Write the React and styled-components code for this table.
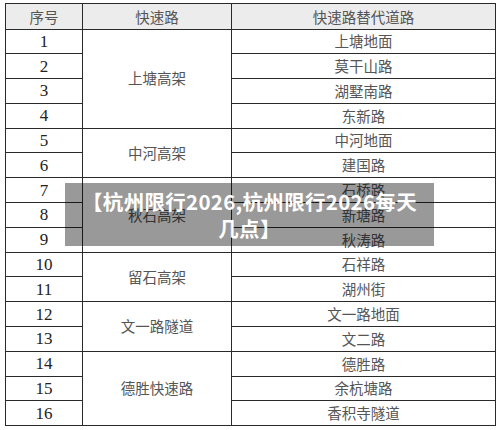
import React from 'react'
import styled, { createGlobalStyle } from 'styled-components'

const GlobalStyle = createGlobalStyle`
  html, body {
    margin: 0;
    padding: 0;
    background: #fff;
  }
`

const Page = styled.div`
  position: relative;
  width: 500px;
  height: 430px;
  padding: 3px 5px 0 5px;
  box-sizing: border-box;
  background: #fff;
`

const Table = styled.table`
  width: 490px;
  border-collapse: collapse;
  table-layout: fixed;
  font-family: "Liberation Serif", "Noto Sans CJK SC", serif;
  font-size: 15px;
  color: #333;
`

const HeadCell = styled.th`
  height: 24.5px;
  padding: 0;
  background: #ececec;
  border: 1.5px solid #2a2a2a;
  font-weight: 400;
  color: #555;
  text-align: center;
  font-family: "Noto Sans CJK SC", sans-serif;
  font-size: 14.5px;
`

const Cell = styled.td`
  height: 23.3px;
  padding: 0;
  border: 1.5px solid #2a2a2a;
  text-align: center;
  line-height: 1;
  color: ${props => (props.$num ? '#222' : '#555')};
  font-family: ${props =>
    props.$num ? '"Liberation Serif", serif' : '"Noto Sans CJK SC", sans-serif'};
  font-size: ${props => (props.$num ? '17px' : '14.5px')};
`

const Row = styled.tr`
  height: 24.8px;
`

const Banner = styled.div`
  position: absolute;
  left: 65px;
  top: 183px;
  width: 369px;
  height: 63px;
  background: rgba(0, 0, 0, 0.4);
  display: flex;
  align-items: center;
  justify-content: center;
  padding: 0 6px;
  box-sizing: border-box;
  color: #fff;
  font-family: "Noto Sans CJK SC", sans-serif;
  font-weight: 700;
  font-size: 20.5px;
  letter-spacing: 0.3px;
  line-height: 27px;
  text-align: center;
  white-space: nowrap;
`

const groups = [
  { road: '上塘高架', alts: ['上塘地面', '莫干山路', '湖墅南路', '东新路'] },
  { road: '中河高架', alts: ['中河地面', '建国路'] },
  { road: '秋石高架', alts: ['石桥路', '新塘路', '秋涛路'] },
  { road: '留石高架', alts: ['石祥路', '湖州街'] },
  { road: '文一路隧道', alts: ['文一路地面', '文二路'] },
  { road: '德胜快速路', alts: ['德胜路', '余杭塘路', '香积寺隧道'] }
]

const App = () => {
  let n = 0
  const rows = []
  groups.forEach(g => {
    g.alts.forEach((alt, i) => {
      n += 1
      rows.push(
        <Row key={n}>
          <Cell $num>{n}</Cell>
          {i === 0 && <Cell rowSpan={g.alts.length}>{g.road}</Cell>}
          <Cell>{alt}</Cell>
        </Row>
      )
    })
  })

  return (
    <Page>
      <GlobalStyle />
      <Table>
        <colgroup>
          <col style={{ width: '77px' }} />
          <col style={{ width: '149px' }} />
          <col style={{ width: '264px' }} />
        </colgroup>
        <thead>
          <tr>
            <HeadCell>序号</HeadCell>
            <HeadCell>快速路</HeadCell>
            <HeadCell>快速路替代道路</HeadCell>
          </tr>
        </thead>
        <tbody>{rows}</tbody>
      </Table>
      <Banner>
        <div>
          【杭州限行2026,杭州限行2026每天
          <br />
          几点】
        </div>
      </Banner>
    </Page>
  )
}

export default App
